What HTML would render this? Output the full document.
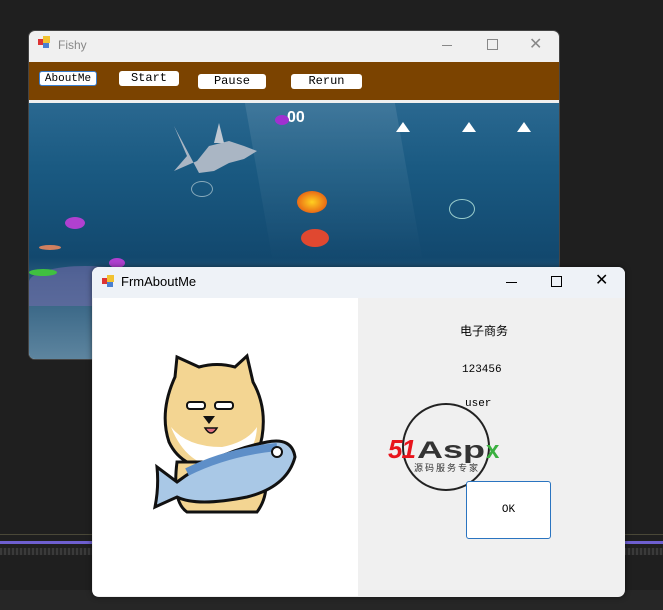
<!DOCTYPE html>
<html><head><meta charset="utf-8"><style>
body{margin:0;width:663px;height:610px;background:#1f1f1f;position:relative;overflow:hidden;font-family:"Liberation Sans","Noto Sans CJK SC",sans-serif}
.a{position:absolute}
.btn{position:absolute;background:#fff;border-radius:3px;font:12px "Liberation Mono",monospace;text-align:center;color:#000}
.tri{position:absolute;width:0;height:0;border-left:7px solid transparent;border-right:7px solid transparent;border-bottom:10px solid #fff}
</style></head><body>
<div class="a" style="left:0;top:534px;width:663px;height:1px;background:#4a4838"></div>
<div class="a" style="left:0;top:541px;width:663px;height:3px;background:#6e5fd0"></div>
<div class="a" style="left:0;top:548px;width:663px;height:7px;background:repeating-linear-gradient(90deg,#3a3a3a 0 2px,#262626 2px 4px)"></div>
<div class="a" style="left:0;top:590px;width:663px;height:20px;background:#262626"></div>

<div class="a" style="left:28px;top:30px;width:532px;height:330px;background:#f0f0f0;border-radius:7px;overflow:hidden;border:1px solid #444;box-sizing:border-box">
 <div class="a" style="left:9px;top:8px;width:6px;height:6px;background:#d33"></div><div class="a" style="left:14px;top:5px;width:7px;height:7px;background:#f2c230"></div><div class="a" style="left:14px;top:12px;width:6px;height:5px;background:#4a7fd0"></div>
 <div class="a" style="left:29px;top:7px;font-size:12px;color:#888">Fishy</div>
 <div class="a" style="left:413px;top:14px;width:10px;height:1px;background:#888"></div>
 <div class="a" style="left:458px;top:8px;width:9px;height:9px;border:1px solid #888"></div>
 <div class="a" style="left:500px;top:3px;font-size:16px;color:#888">✕</div>
 <div class="a" style="left:0;top:31px;width:532px;height:38px;background:#7b4300"></div>
 <div class="btn" style="left:10px;top:40px;width:58px;height:15px;line-height:15px;border:1px solid #3b7fd0;box-sizing:border-box;font-size:11px">AboutMe</div>
 <div class="btn" style="left:90px;top:40px;width:60px;height:15px;line-height:15px">Start</div>
 <div class="btn" style="left:169px;top:43px;width:68px;height:15px;line-height:15px">Pause</div>
 <div class="btn" style="left:262px;top:43px;width:71px;height:15px;line-height:15px">Rerun</div>
 <div class="a" style="left:0;top:72px;width:532px;height:258px;background:linear-gradient(180deg,#2a6890 0%,#1a5a82 25%,#12486e 60%,#2a5a7c 68%,#5f86a0 100%)"></div>
 <div class="a" style="left:230px;top:72px;width:150px;height:160px;background:linear-gradient(180deg,rgba(255,255,255,.1),rgba(255,255,255,0));transform:skewX(10deg)"></div>
 <div class="a" style="left:0;top:235px;width:140px;height:40px;background:#6f6aa8;opacity:.6;border-radius:40% 60% 0 0"></div>
 <div class="tri" style="left:367px;top:91px"></div><div class="tri" style="left:433px;top:91px"></div><div class="tri" style="left:488px;top:91px"></div>
 <div class="a" style="left:258px;top:78px;color:#fff;font-size:16px;font-weight:bold">00</div>
 <div class="a" style="left:246px;top:84px;width:14px;height:10px;background:#a030d0;border-radius:50%"></div>
 <svg class="a" style="left:140px;top:90px" width="95" height="60"><path d="M5 5 L18 35 L5 50 L28 40 L40 25 L60 20 L75 25 L88 30 L75 38 L60 42 L45 50 L30 52 Z" fill="#aab6c4"/><path d="M50 2 L55 22 L45 22Z" fill="#c0c8d2"/></svg>
 <div class="a" style="left:268px;top:160px;width:30px;height:22px;background:radial-gradient(#ffd020,#e04010);border-radius:50%"></div>
 <div class="a" style="left:272px;top:198px;width:28px;height:18px;background:#e04830;border-radius:50%"></div>
 <div class="a" style="left:36px;top:186px;width:20px;height:12px;background:#b040d0;border-radius:50%"></div>
 <div class="a" style="left:10px;top:214px;width:22px;height:5px;background:#d08060;border-radius:50%"></div>
 <div class="a" style="left:0;top:238px;width:28px;height:7px;background:#40c040;border-radius:50%"></div>
 <div class="a" style="left:80px;top:227px;width:16px;height:10px;background:#b040d0;border-radius:50%"></div>
 <div class="a" style="left:420px;top:168px;width:24px;height:18px;border:1px solid #9cc;border-radius:50%"></div>
 <div class="a" style="left:162px;top:150px;width:20px;height:14px;border:1px solid #8ab;border-radius:50%"></div>
</div>

<div class="a" style="left:92px;top:267px;width:533px;height:330px;background:#f0f0f0;border-radius:7px;overflow:hidden;box-shadow:0 0 6px rgba(0,0,0,.5)">
 <div class="a" style="left:0;top:0;width:533px;height:31px;background:#eef2f7"></div>
 <div class="a" style="left:10px;top:11px;width:6px;height:6px;background:#d33"></div><div class="a" style="left:15px;top:8px;width:7px;height:7px;background:#f2c230"></div><div class="a" style="left:15px;top:15px;width:6px;height:5px;background:#4a7fd0"></div>
 <div class="a" style="left:29px;top:7px;font-size:13px;color:#000">FrmAboutMe</div>
 <div class="a" style="left:414px;top:15px;width:11px;height:1px;background:#000"></div>
 <div class="a" style="left:459px;top:9px;width:9px;height:9px;border:1px solid #000"></div>
 <div class="a" style="left:503px;top:3px;font-size:16px;color:#000">✕</div>
 <div class="a" style="left:1px;top:31px;width:265px;height:298px;background:#fff"></div>
 <svg class="a" style="left:55px;top:85px" width="160" height="180" viewBox="0 0 160 180">
  <path d="M28 25 L30 5 L52 15 Q70 10 88 15 L100 4 L106 30 Q120 55 115 85 Q110 115 75 118 Q35 118 22 90 Q12 60 28 25Z" fill="#f3d592" stroke="#111" stroke-width="3"/>
  <path d="M24 75 Q40 95 75 95 Q100 90 110 75 Q108 110 75 115 Q40 115 24 75Z" fill="#fff"/>
  <rect x="40" y="50" width="18" height="7" rx="3" fill="#fff" stroke="#111" stroke-width="2"/>
  <rect x="68" y="50" width="18" height="7" rx="3" fill="#fff" stroke="#111" stroke-width="2"/>
  <path d="M56 64 L68 64 L62 72Z" fill="#111"/><path d="M58 76 Q64 86 70 76Z" fill="#e07080" stroke="#111" stroke-width="1.5"/>
  <path d="M30 110 Q25 150 40 160 L110 160 Q125 140 115 110Z" fill="#f3d592" stroke="#111" stroke-width="3"/>
  <path d="M10 115 L30 130 Q70 100 120 90 Q145 85 148 105 Q140 135 100 145 Q50 155 30 145 L8 155 Q12 135 10 115Z" fill="#a9c8e6" stroke="#111" stroke-width="3"/>
  <path d="M40 120 Q80 100 130 95" stroke="#5e8fc8" stroke-width="8" fill="none"/>
  <circle cx="130" cy="100" r="5" fill="#fff" stroke="#111" stroke-width="2"/>
 </svg>
 <div class="a" style="left:368px;top:55px;font-size:12px;color:#000">电子商务</div>
 <div class="a" style="left:370px;top:97px;font:11px 'Liberation Mono',monospace;color:#000">123456</div>
 <div class="a" style="left:373px;top:131px;font:11px 'Liberation Mono',monospace;color:#000">user</div>
 <svg class="a" style="left:294px;top:134px" width="135" height="95">
  <circle cx="60" cy="46" r="43" fill="none" stroke="#222" stroke-width="2"/>
  <text x="2" y="57" font-family="Liberation Sans" font-style="italic" font-weight="bold" font-size="26" fill="#e8141c" textLength="28">51</text>
  <text x="31" y="57" font-family="Liberation Sans" font-weight="bold" font-size="24" fill="#333" textLength="68" lengthAdjust="spacingAndGlyphs">Asp</text>
  <text x="100" y="57" font-family="Liberation Sans" font-weight="bold" font-size="24" fill="#3ab040">x</text>
  <text x="28" y="70" font-family="Noto Sans CJK SC" font-size="9" fill="#333" letter-spacing="2">源码服务专家</text>
 </svg>
 <div class="a" style="left:374px;top:214px;width:83px;height:56px;background:#fff;border:1px solid #2a74c0;border-radius:3px;font:11px 'Liberation Mono',monospace;text-align:center;line-height:56px">OK</div>
</div>
</body></html>
